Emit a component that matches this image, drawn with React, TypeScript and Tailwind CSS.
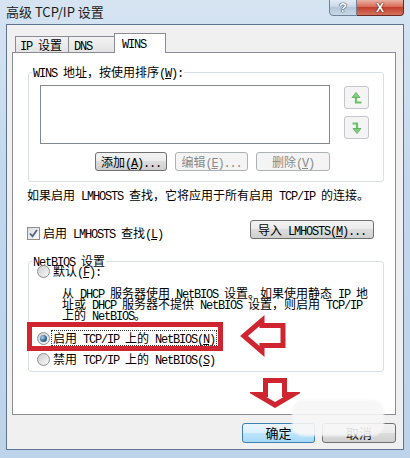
import React from "react";

const LAT = "font-['Liberation_Mono',monospace] tracking-[-1.2px] leading-[0]";

function T({ s }: { s: string }) {
  const parts = s.split(/([\x20-\x7e]+)/).filter((p) => p !== "");
  return (
    <>
      {parts.map((p, i) =>
        /^[\x20-\x7e]+$/.test(p) ? (
          <span key={i} className={LAT}>
            {p}
          </span>
        ) : (
          <span key={i}>{p}</span>
        )
      )}
    </>
  );
}

function L({ a, m, b }: { a: string; m: string; b?: string }) {
  return (
    <span>
      <T s={a} />
      <span className={`${LAT} underline underline-offset-[1px]`}>{m}</span>
      {b ? <T s={b} /> : null}
    </span>
  );
}

function Radio({ on }: { on?: boolean }) {
  return (
    <span className="w-[13px] h-[13px] rounded-full border border-[#8f8f8f] bg-[linear-gradient(135deg,#cfcfcf,#f8f8f8)] flex items-center justify-center shrink-0">
      {on ? (
        <span className="w-[7px] h-[7px] rounded-full bg-[radial-gradient(circle_at_35%_35%,#a9d6f4,#2b5f92_60%,#173a60)]" />
      ) : (
        <span className="w-[7px] h-[7px] rounded-full bg-[linear-gradient(135deg,#d2d2d2,#f5f5f5)]" />
      )}
    </span>
  );
}

const BTN =
  "h-[19px] flex items-center justify-center rounded-[3px] border border-[#707070] bg-[linear-gradient(#f2f2f2,#ebebeb_50%,#dddddd_50%,#cfcfcf)] leading-[14px] whitespace-nowrap";
const BTN_DIS =
  "h-[19px] flex items-center justify-center rounded-[3px] border border-[#adb2b5] bg-[#f4f4f4] text-[#8a8a8a] leading-[14px] whitespace-nowrap";

export default function App() {
  return (
    <div className="w-[410px] h-[458px] relative overflow-hidden bg-[linear-gradient(#d6e4f2,#c3d8ed_40%,#bcd3ea)] font-['Noto_Sans_CJK_SC',sans-serif] text-[12px] text-black">
      {/* title bar */}
      <div className="h-[24px] flex items-start justify-between">
        <div className="pl-[6px] pt-[4px] text-[13px] leading-[16px] text-[#1b1b1b] font-['Noto_Sans_CJK_SC',sans-serif]">
          高级 TCP/IP 设置
        </div>
        <div className="flex pr-[6px]">
          <div className="w-[28px] h-[17px] -mt-[1px] rounded-bl-[4px] border border-[#6f8297] bg-[linear-gradient(#e3ecf5,#c6d5e5_50%,#b3c6da_50%,#c9d8e7)] flex items-center justify-center text-[13px] font-bold leading-[13px] text-white [text-shadow:0_0_1px_#2d3d52,0_0_1px_#2d3d52,0_0_1px_#2d3d52] font-['Liberation_Sans',sans-serif]">
            ?
          </div>
          <div className="w-[47px] h-[17px] -mt-[1px] rounded-br-[4px] border border-l-0 border-[#6b2a22] bg-[linear-gradient(#eab1a3,#d86b58_45%,#c2402d_50%,#d4735f)] flex items-center justify-center text-[12px] font-bold leading-[12px] text-white [text-shadow:0_0_1px_#5a1a12,0_0_1px_#5a1a12,0_0_1px_#5a1a12] font-['Liberation_Sans',sans-serif]">
            X
          </div>
        </div>
      </div>

      {/* client area */}
      <div className="ml-[6px] w-[398px] h-[426px] border border-[#5d7390] bg-[#f0f0f0] flex flex-col pt-[8px] pl-[5px] pr-[7px]">
        {/* tabs */}
        <div className="h-[19px] flex items-end pl-[3px] relative z-10">
          <div className="w-[54px] h-[16px] border border-b-0 border-[#898c95] bg-[linear-gradient(#f3f3f3,#e3e3e3)] pl-[4px] pt-[1px] leading-[14px] whitespace-nowrap">
            <T s="IP 设置" />
          </div>
          <div className="w-[46px] h-[16px] border border-l-0 border-b-0 border-[#898c95] bg-[linear-gradient(#f3f3f3,#e3e3e3)] pl-[5px] pt-[1px] leading-[14px]">
            <T s="DNS" />
          </div>
          <div className="w-[52px] h-[20px] -mb-[1px] -ml-[1px] border border-b-0 border-[#898c95] bg-white pl-[7px] pt-[2px] leading-[14px]">
            <T s="WINS" />
          </div>
        </div>

        {/* tab panel */}
        <div className="h-[363px] border border-[#898c95] bg-white flex flex-col">
          {/* WINS addresses group */}
          <fieldset className="mt-[12px] ml-[15px] w-[356px] border border-[#d5dfe5] rounded-[3px]">
            <legend className="ml-[3px] px-[1px] leading-[14px]">
              <L a="WINS 地址，按使用排序(" m="W" b="):" />
            </legend>
            <div className="pl-[11px] pt-[6px] pb-[10px] flex flex-col">
              <div className="flex">
                <div className="w-[290px] h-[59px] border border-[#828790] bg-white" />
                <div className="ml-[14px] pt-[1px] flex flex-col gap-[7px]">
                  <div className="w-[25px] h-[23px] rounded-[3px] border border-[#c3c7cb] bg-[#f4f4f4] flex items-center justify-center">
                    <svg width="12" height="14" viewBox="0 0 12 14">
                      <path d="M5 5 V11.5 H10.5" fill="none" stroke="#6cbf6c" strokeWidth="2.2" />
                      <polygon points="1,6.5 5,1.5 9,6.5" fill="#7fcf7f" stroke="#5aa85a" strokeWidth="0.8" />
                    </svg>
                  </div>
                  <div className="w-[25px] h-[23px] rounded-[3px] border border-[#c3c7cb] bg-[#f4f4f4] flex items-center justify-center">
                    <svg width="12" height="14" viewBox="0 0 12 14">
                      <path d="M1.5 2.5 H6 V9" fill="none" stroke="#6cbf6c" strokeWidth="2.2" />
                      <polygon points="2,7.5 6,12.5 10,7.5" fill="#7fcf7f" stroke="#5aa85a" strokeWidth="0.8" />
                    </svg>
                  </div>
                </div>
              </div>
              <div className="mt-[8px] w-[290px] flex justify-end gap-[8px]">
                <div className={`${BTN} w-[72px]`}>
                  <L a="添加(" m="A" b=")..." />
                </div>
                <div className={`${BTN_DIS} w-[73px]`}>
                  <L a="编辑(" m="E" b=")..." />
                </div>
                <div className={`${BTN_DIS} w-[74px]`}>
                  <L a="删除(" m="V" b=")" />
                </div>
              </div>
            </div>
          </fieldset>

          <div className="mt-[6px] ml-[14px] leading-[14px] whitespace-nowrap">
            <T s="如果启用 LMHOSTS 查找，它将应用于所有启用 TCP/IP 的连接。" />
          </div>

          <div className="mt-[18px] ml-[14px] w-[347px] flex justify-between items-start">
            <div className="flex items-center gap-[3px] mt-[6px] leading-[14px]">
              <span className="w-[13px] h-[13px] border border-[#8f8f8f] bg-[linear-gradient(135deg,#dcdcdc,#fbfbfb)] flex items-center justify-center">
                <svg width="11" height="11" viewBox="0 0 11 11">
                  <path d="M2 5.5 L4.5 8.3 L9 2" fill="none" stroke="#52658c" strokeWidth="1.8" />
                </svg>
              </span>
              <L a="启用 LMHOSTS 查找(" m="L" b=")" />
            </div>
            <div className={`${BTN} w-[124px]`}>
              <L a="导入 LMHOSTS(" m="M" b=")..." />
            </div>
          </div>

          {/* NetBIOS group */}
          <fieldset className="mt-[14px] ml-[15px] w-[356px] border border-[#d5dfe5] rounded-[3px]">
            <legend className="ml-[3px] px-[1px] leading-[14px]">
              <T s="NetBIOS 设置" />
            </legend>
            <div className="pl-[8px] pb-[5px] flex flex-col">
              <div className="-mt-[4px] flex items-center gap-[3px] leading-[14px]">
                <Radio />
                <L a="默认(" m="F" b="):" />
              </div>
              <div className="mt-[9px] pl-[25px] leading-[11px] whitespace-nowrap">
                <div>
                  <T s="从 DHCP 服务器使用 NetBIOS 设置。如果使用静态 IP 地" />
                </div>
                <div>
                  <T s="址或 DHCP 服务器不提供 NetBIOS 设置，则启用 TCP/IP" />
                </div>
                <div>
                  <T s="上的 NetBIOS。" />
                </div>
              </div>
              <div className="mt-[11px] flex items-center gap-[2px] leading-[14px]">
                <Radio on />
                <span className="outline-1 outline-dotted outline-[#333] px-[1px]">
                  <L a="启用 TCP/IP 上的 NetBIOS(" m="N" b=")" />
                </span>
              </div>
              <div className="mt-[7px] flex items-center gap-[3px] leading-[14px]">
                <Radio />
                <L a="禁用 TCP/IP 上的 NetBIOS(" m="S" b=")" />
              </div>
            </div>
          </fieldset>
        </div>

        {/* dialog buttons */}
        <div className="mt-[8px] flex justify-end gap-[7px]">
          <div className="w-[73px] h-[20px] flex items-center justify-center rounded-[3px] border border-[#3c7fb1] bg-[linear-gradient(#eaf6fd,#d9f0fc_50%,#bee6fd_50%,#a7d9f5)] text-[13px] leading-[14px]">
            确定
          </div>
          <div className="w-[74px] h-[20px] flex items-center justify-center rounded-[3px] border border-[#707070] bg-[linear-gradient(#f2f2f2,#ebebeb_50%,#dddddd_50%,#cfcfcf)] text-[13px] leading-[14px]">
            取消
          </div>
        </div>
      </div>

      {/* red highlight box */}
      <div className="absolute left-[27px] top-[322px] w-[196px] h-[29px] border-[5px] border-[#cf2530]" />

      {/* red left arrow */}
      <svg className="absolute left-[238px] top-[315px]" width="50" height="42" viewBox="0 0 50 42">
        <polygon
          points="6,21 24,5.5 24,10.5 45,10.5 45,30.5 24,30.5 24,36.5"
          fill="white"
          stroke="#cf2530"
          strokeWidth="5"
          strokeLinejoin="miter"
        />
      </svg>

      {/* red down arrow */}
      <svg className="absolute left-[250px] top-[375px]" width="50" height="36" viewBox="0 0 50 36">
        <polygon
          points="15.5,5.5 34.5,5.5 34.5,19.5 43,19.5 25,30 7,19.5 15.5,19.5"
          fill="white"
          stroke="#cf2530"
          strokeWidth="5"
          strokeLinejoin="miter"
        />
      </svg>

      {/* watermark blur */}
      <div className="absolute left-[292px] top-[400px] w-[92px] h-[36px] rounded-[12px] bg-[#f6f6f6]/90 blur-[1px]" />
    </div>
  );
}
